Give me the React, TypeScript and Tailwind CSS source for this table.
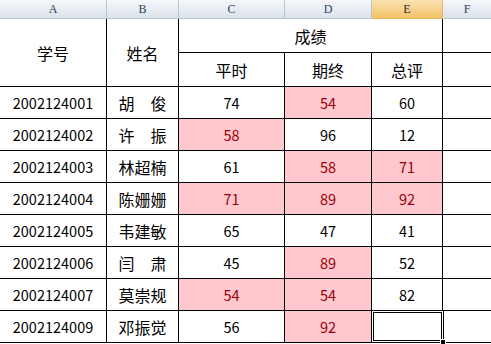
import React from 'react';

type Row = {
  id: string;
  name: string;
  scores: [string, string, string];
  hot: [boolean, boolean, boolean];
};

const rows: Row[] = [
  { id: '2002124001', name: '胡　俊', scores: ['74', '54', '60'], hot: [false, true, false] },
  { id: '2002124002', name: '许　振', scores: ['58', '96', '12'], hot: [true, false, false] },
  { id: '2002124003', name: '林超楠', scores: ['61', '58', '71'], hot: [false, true, true] },
  { id: '2002124004', name: '陈姗姗', scores: ['71', '89', '92'], hot: [true, true, true] },
  { id: '2002124005', name: '韦建敏', scores: ['65', '47', '41'], hot: [false, false, false] },
  { id: '2002124006', name: '闫　肃', scores: ['45', '89', '52'], hot: [false, true, false] },
  { id: '2002124007', name: '莫崇规', scores: ['54', '54', '82'], hot: [true, true, false] },
  { id: '2002124009', name: '邓振觉', scores: ['56', '92', ''], hot: [false, true, false] },
];

const cjk = "font-['Noto_Sans_CJK_SC',sans-serif] text-[16px]";
const num = "font-['Noto_Sans_CJK_SC',sans-serif] text-[14.5px] tabular-nums";
const cell = 'flex items-center justify-center border-r border-b border-black';

function ColHead({ label, active, last }: { label: string; active?: boolean; last?: boolean }) {
  return (
    <div
      className={`flex items-center justify-center border-b font-['Liberation_Serif',serif] text-[12px] ${
        last ? '' : 'border-r'
      } ${
        active
          ? 'bg-gradient-to-b from-[#fae2b2] to-[#f2c264] border-[#e9b660] text-[#2b2b2b]'
          : 'bg-gradient-to-b from-[#f5f7fa] to-[#dbe2ea] border-[#b9c6d6] text-[#2c4262]'
      }`}
    >
      {label}
    </div>
  );
}

export default function App() {
  return (
    <div className="w-[491px] h-[344px] overflow-hidden bg-white text-black">
      <div className="grid grid-cols-[107px_72px_106px_87px_71px_48px] grid-rows-[19px_34px_34px_repeat(8,32px)]">
        <ColHead label="A" />
        <ColHead label="B" />
        <ColHead label="C" />
        <ColHead label="D" />
        <ColHead label="E" active />
        <ColHead label="F" last />

        <div className={`${cell} ${cjk} row-span-2`}>学号</div>
        <div className={`${cell} ${cjk} row-span-2`}>姓名</div>
        <div className={`${cell} ${cjk} col-span-3`}>成绩</div>
        <div className="border-b border-black" />
        <div className={`${cell} ${cjk}`}>平时</div>
        <div className={`${cell} ${cjk}`}>期终</div>
        <div className={`${cell} ${cjk}`}>总评</div>
        <div className="border-b border-black" />

        {rows.map((r, i) => (
          <React.Fragment key={r.id}>
            <div className={`${cell} ${num}`}>{r.id}</div>
            <div className={`${cell} ${cjk}`}>{r.name}</div>
            {r.scores.map((s, j) => {
              const selected = i === rows.length - 1 && j === 2;
              return (
                <div
                  key={j}
                  className={`${cell} ${num} relative ${
                    r.hot[j] ? 'bg-[#ffc7ce] text-[#9c0006]' : ''
                  }`}
                >
                  {s}
                  {selected && (
                    <div className="absolute -left-px -top-px -right-[2px] -bottom-px z-10 border border-black">
                      <div className="h-full w-full border border-white">
                        <div className="h-full w-full border border-black" />
                      </div>
                      <div className="absolute -right-[3px] -bottom-[3px] h-[6px] w-[6px] bg-black border border-white" />
                    </div>
                  )}
                </div>
              );
            })}
            <div className="border-b border-black" />
          </React.Fragment>
        ))}
      </div>
    </div>
  );
}
